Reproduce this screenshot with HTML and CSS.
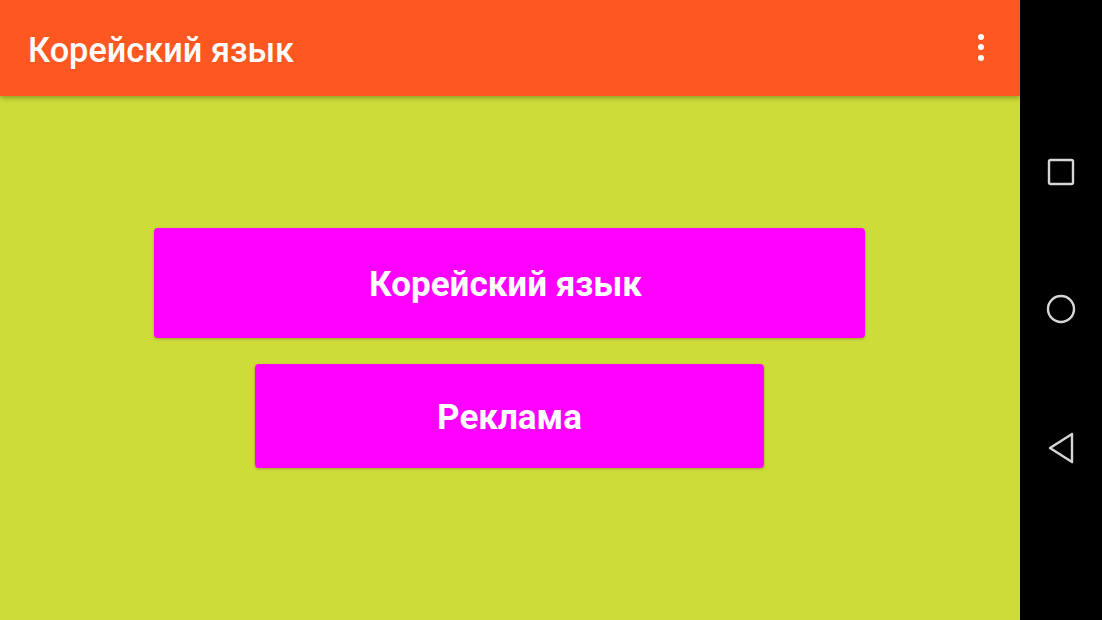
FILE: index.html
```html
<!DOCTYPE html>
<html lang="ru">
<head>
<meta charset="utf-8">
<link rel="stylesheet" href="styles.css">
</head>
<body>
<div class="screen">
  <div class="app">
    <header class="appbar">
      <h1 class="title">Корейский язык</h1>
      <div class="menu">
        <span class="dot"></span><span class="dot"></span><span class="dot"></span>
      </div>
    </header>
    <main class="content">
      <button class="btn btn-wide">Корейский язык</button>
      <button class="btn btn-narrow">Реклама</button>
    </main>
  </div>
  <nav class="navbar">
    <svg class="nav-icon" width="28" height="28" viewBox="0 0 28 28"><rect x="2" y="2" width="24" height="24" rx="1.5" fill="none" stroke="#d6d6d6" stroke-width="2.4"/></svg>
    <svg class="nav-icon" width="30" height="30" viewBox="0 0 30 30"><circle cx="15" cy="15" r="13" fill="none" stroke="#d6d6d6" stroke-width="2.4"/></svg>
    <svg class="nav-icon" width="28" height="32" viewBox="0 0 28 32"><path d="M25 2 L3 16 L25 30 Z" fill="none" stroke="#d6d6d6" stroke-width="2.4" stroke-linejoin="round"/></svg>
  </nav>
</div>
</body>
</html>
```

FILE: styles.css
```css
html, body {
  margin: 0;
  padding: 0;
  width: 1102px;
  height: 620px;
  overflow: hidden;
  font-family: Roboto, "Liberation Sans", sans-serif;
}
.screen {
  display: flex;
  width: 1102px;
  height: 620px;
}
.app {
  width: 1020px;
  height: 620px;
  background: #cddc39;
  display: flex;
  flex-direction: column;
}
.appbar {
  height: 96px;
  background: #ff5722;
  display: flex;
  align-items: center;
  justify-content: space-between;
  padding: 0 28px 0 28px;
  box-sizing: border-box;
  box-shadow: 0 2px 5px rgba(0,0,0,0.3);
  position: relative;
  z-index: 1;
}
.title {
  margin: 0;
  color: #fff;
  font-size: 34.3px;
  font-weight: 500;
  letter-spacing: 0;
  padding-top: 3px;
}
.menu {
  display: flex;
  flex-direction: column;
  gap: 4.5px;
  margin-right: 8px;
  padding-bottom: 2px;
}
.dot {
  width: 6px;
  height: 6px;
  border-radius: 50%;
  background: #fff;
}
.content {
  flex: 1;
  display: flex;
  flex-direction: column;
  align-items: center;
  padding-top: 132px;
  gap: 26px;
}
.btn {
  border: none;
  background: #ff00ff;
  color: #fff;
  font-family: Roboto, "Liberation Sans", sans-serif;
  font-weight: 700;
  font-size: 35px;
  border-radius: 4px;
  box-shadow: 0 1px 3px rgba(0,0,0,0.25);
  margin-left: -1px;
  padding: 2px 0 0 0;
}
.btn-wide {
  width: 711px;
  height: 110px;
  padding-right: 8px;
}
.btn-narrow {
  width: 509px;
  height: 104px;
}
.navbar {
  width: 82px;
  height: 620px;
  background: #000;
  display: flex;
  flex-direction: column;
  align-items: center;
  padding-top: 158px;
  box-sizing: border-box;
  gap: 108px;
}
.nav-icon {
  display: block;
}
```
